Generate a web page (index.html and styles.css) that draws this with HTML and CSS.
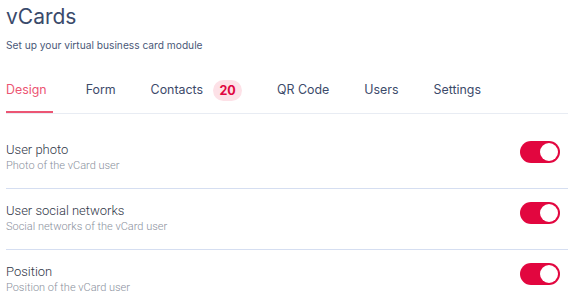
FILE: index.html
```html
<!DOCTYPE html>
<html>
<head>
	<title>vCards</title>
	<link rel="stylesheet" href="styles.css">
</head>
<body>
	<div class="page">
		<h1>vCards</h1>
		<p class="lead">Set up your virtual business card module</p>

		<ul class="tabs">
			<li class="active">Design</li>
			<li>Form</li>
			<li>Contacts <span class="badge">20</span></li>
			<li>QR Code</li>
			<li>Users</li>
			<li>Settings</li>
		</ul>

		<ul class="options">
			<li>
				<div class="text">
					<h2>User photo</h2>
					<span>Photo of the vCard user</span>
				</div>
				<span class="toggle on"></span>
			</li>
			<li>
				<div class="text">
					<h2>User social networks</h2>
					<span>Social networks of the vCard user</span>
				</div>
				<span class="toggle on"></span>
			</li>
			<li>
				<div class="text">
					<h2>Position</h2>
					<span>Position of the vCard user</span>
				</div>
				<span class="toggle on"></span>
			</li>
		</ul>
	</div>
</body>
</html>
```

FILE: styles.css
```css
html *{
	margin: 0;
	padding: 0;
	box-sizing: border-box;
}
body{
	background: #fff;
	font-family: Inter, "Noto Sans", sans-serif;
	color: #3a4a6b;
	overflow: hidden;
}
.page{
	padding: 5px 0 0 6px;
}
h1{
	font-size: 21px;
	line-height: 24px;
	font-weight: 400;
	color: #3a4a6b;
}
.lead{
	margin-top: 10px;
	font-size: 10.2px;
	line-height: 13px;
	color: #4a5878;
}
.tabs{
	margin-top: 29px;
	display: flex;
	list-style: none;
	border-bottom: 1px solid #e8ecf3;
}
.tabs li{
	font-size: 12.4px;
	line-height: 18px;
	padding-bottom: 10px;
	margin-right: 35px;
	border-bottom: 2px solid transparent;
	color: #3c4a6a;
	display: flex;
	align-items: flex-start;
}
.tabs li.active{
	color: #ec5573;
	border-bottom-color: #ec5573;
	padding-right: 6px;
	margin-right: 33px;
}
.badge{
	display: inline-block;
	margin-left: 10px;
	margin-top: -1px;
	width: 29px;
	height: 21px;
	line-height: 21px;
	border-radius: 11px;
	background: #fde1e7;
	color: #e0063f;
	font-weight: 700;
	font-size: 12.5px;
	text-align: center;
}
.options{
	list-style: none;
	margin-top: 14px;
	margin-right: 8px;
	font-family: Roboto, "Noto Sans", sans-serif;
}
.options li{
	display: flex;
	justify-content: space-between;
	align-items: flex-start;
	padding: 14px 8px 15px 0;
	border-bottom: 1px solid #d5def1;
	margin-right: -8px;
}
.options li:last-child{
	border-bottom: none;
}
.text h2{
	font-size: 13px;
	line-height: 16px;
	font-weight: 300;
	color: #2f3647;
}
.text span{
	display: block;
	margin-top: 1px;
	font-size: 11px;
	line-height: 14px;
	font-weight: 300;
	color: #8a909d;
}
.toggle{
	position: relative;
	display: block;
	width: 40px;
	height: 22px;
	margin-top: -1px;
	border-radius: 11px;
	background: #d7d9de;
}
.toggle.on{
	background: #e2063f;
}
.toggle:after{
	content: '';
	position: absolute;
	top: 2px;
	left: 2px;
	width: 18px;
	height: 18px;
	border-radius: 50%;
	background: #fff;
}
.toggle.on:after{
	left: 20px;
}
```
